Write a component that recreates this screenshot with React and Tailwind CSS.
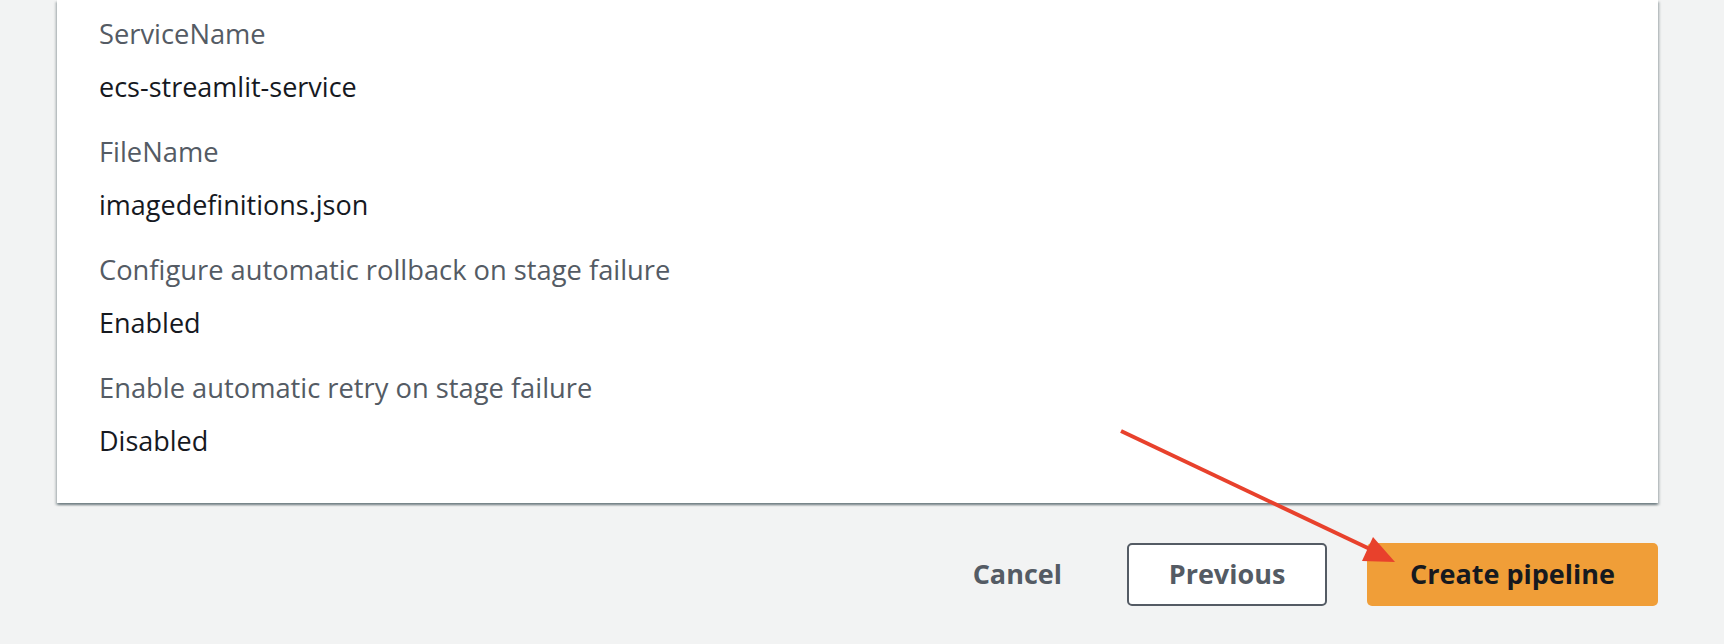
import React from "react";

const fields = [
  { label: "ServiceName", value: "ecs-streamlit-service" },
  { label: "FileName", value: "imagedefinitions.json" },
  { label: "Configure automatic rollback on stage failure", value: "Enabled" },
  { label: "Enable automatic retry on stage failure", value: "Disabled" },
];

// review step, bottom part of the last section + wizard actions
export default function App() {
  return (
    <div className="relative w-[1724px] h-[644px] overflow-hidden bg-[#f2f3f3] font-['Open_Sans',sans-serif]">
      <div className="ml-[57px] w-[1601px] bg-white pt-[18px] pl-[42px] pb-[42px] shadow-[0_2px_2px_0_rgba(0,28,36,0.35),2px_2px_2px_0_rgba(0,28,36,0.15),-2px_2px_2px_0_rgba(0,28,36,0.15)]">
        <div className="flex flex-col gap-[29px]">
          {fields.map((f) => (
            <div key={f.label}>
              <div className="text-[27.3px] leading-[32px] text-[#545b64] mb-[17px]">{f.label}</div>
              <div className="text-[27px] leading-[40px] text-[#16191f]">{f.value}</div>
            </div>
          ))}
        </div>
      </div>

      <div className="mt-[40px] mr-[66px] flex justify-end items-center">
        <button className="mr-[65px] text-[27px] font-bold text-[#545b64]">Cancel</button>
        <button className="w-[200px] h-[63px] rounded-[5px] border-2 border-[#545b64] bg-white text-[27px] font-bold text-[#545b64]">
          Previous
        </button>
        <button className="ml-[40px] w-[291px] h-[63px] rounded-[5px] bg-[#f09e38] text-[27px] font-bold text-[#16191f]">
          Create pipeline
        </button>
      </div>

      <svg className="absolute left-0 top-0 pointer-events-none" width="1724" height="644">
        <line x1="1121" y1="431" x2="1372" y2="550" stroke="#e8412c" strokeWidth="4" />
        <polygon points="1395,562 1373,537 1362,561" fill="#e8412c" />
      </svg>
    </div>
  );
}
